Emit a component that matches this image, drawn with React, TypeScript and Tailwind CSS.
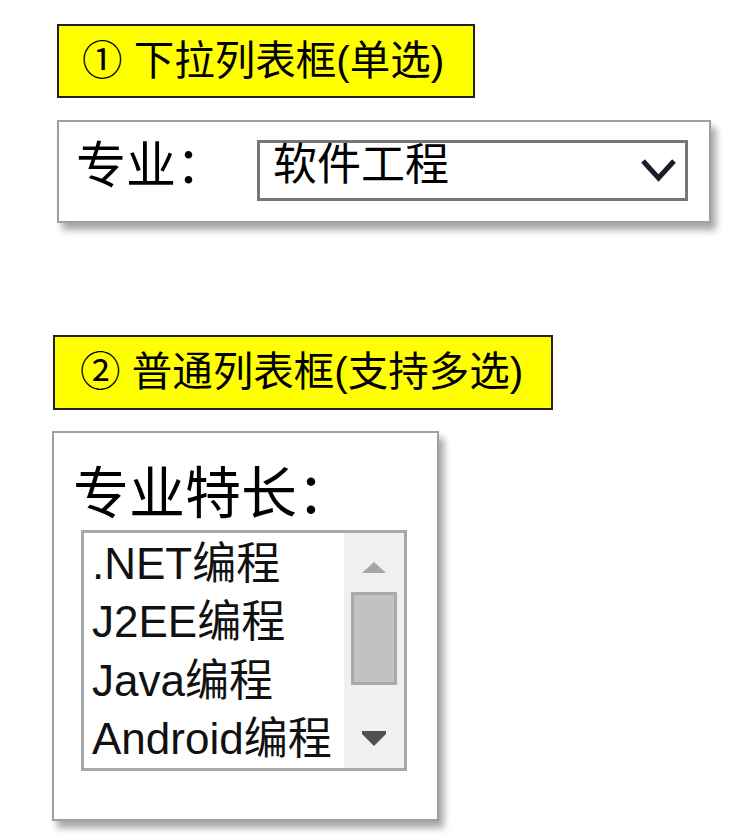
import React from "react";

const cjk = { fontFamily: '"Noto Sans CJK SC", sans-serif' };
const mixed = { fontFamily: '"Liberation Sans", "Noto Sans CJK SC", sans-serif' };

function Chevron() {
  return (
    <svg width="37" height="27" viewBox="0 0 37 27" className="block">
      <polyline points="3,4 18.5,21 34,4" fill="none" stroke="#1c1c2c" strokeWidth="5" strokeLinecap="butt" strokeLinejoin="miter" />
    </svg>
  );
}

export default function App() {
  const items = [".NET编程", "J2EE编程", "Java编程", "Android编程"];
  return (
    <div className="w-[737px] min-h-[840px] bg-white flex flex-col text-black">
      {/* Title 1 */}
      <div
        className="ml-[57px] mt-[24px] w-[418px] h-[74px] bg-[#ffff00] border-2 border-[#222] flex items-center pl-[23px] text-[40.5px] leading-none whitespace-nowrap"
        style={mixed}
      >
        ① 下拉列表框(单选)
      </div>

      {/* Panel 1 */}
      <div className="ml-[57px] mt-[22px] w-[654px] h-[103px] border-2 border-[#a0a0a0] bg-white shadow-[5px_7px_7px_rgba(0,0,0,0.35)] flex items-start pt-[18px] pl-[17px]">
        <div className="w-[181px] h-[61px] flex items-center text-[50px] leading-none" style={cjk}>
          <span className="-mt-[20px]">专业：</span>
        </div>
        <div className="w-[431px] h-[61px] border-[3px] border-[#777] flex items-center justify-between pl-[13px] pr-[8px]">
          <span className="text-[44px] leading-none -mt-[20px]" style={cjk}>
            软件工程
          </span>
          <Chevron />
        </div>
      </div>

      {/* Title 2 */}
      <div
        className="ml-[53px] mt-[112px] w-[500px] h-[75px] bg-[#ffff00] border-2 border-[#222] flex items-center pl-[25px] text-[40.5px] leading-none whitespace-nowrap"
        style={mixed}
      >
        ② 普通列表框(支持多选)
      </div>

      {/* Panel 2 */}
      <div className="ml-[52px] mt-[21px] w-[387px] h-[390px] border-2 border-[#a0a0a0] bg-white shadow-[5px_7px_7px_rgba(0,0,0,0.35)] flex flex-col pt-[28px]">
        <div className="ml-[19px] h-[69px] text-[56px] leading-none" style={cjk}>
          专业特长：
        </div>
        <div className="ml-[27px] w-[326px] h-[241px] border-[3px] border-[#a8a8a8] flex">
          <div className="flex-1 flex flex-col pl-[8px] pt-[2px]">
            {items.map((t) => (
              <div key={t} className="h-[59px] flex items-center text-[44px] leading-none whitespace-nowrap text-[#111]" style={mixed}>
                {t}
              </div>
            ))}
          </div>
          <div className="w-[60px] bg-[#f0f0f0] flex flex-col items-center pt-[29px]">
            <svg width="24" height="11" viewBox="0 0 24 11" className="block">
              <polygon points="12,0 24,11 0,11" fill="#a6a6a6" />
            </svg>
            <div className="mt-[19px] w-[46px] h-[93px] bg-[#c2c2c2] border-[3px] border-[#a9a9a9]" />
            <div className="flex-1" />
            <svg width="24" height="15" viewBox="0 0 24 15" className="block mb-[22px]">
              <polygon points="0,0 24,0 24,3 12,15 0,3" fill="#505050" />
            </svg>
          </div>
        </div>
      </div>
    </div>
  );
}
